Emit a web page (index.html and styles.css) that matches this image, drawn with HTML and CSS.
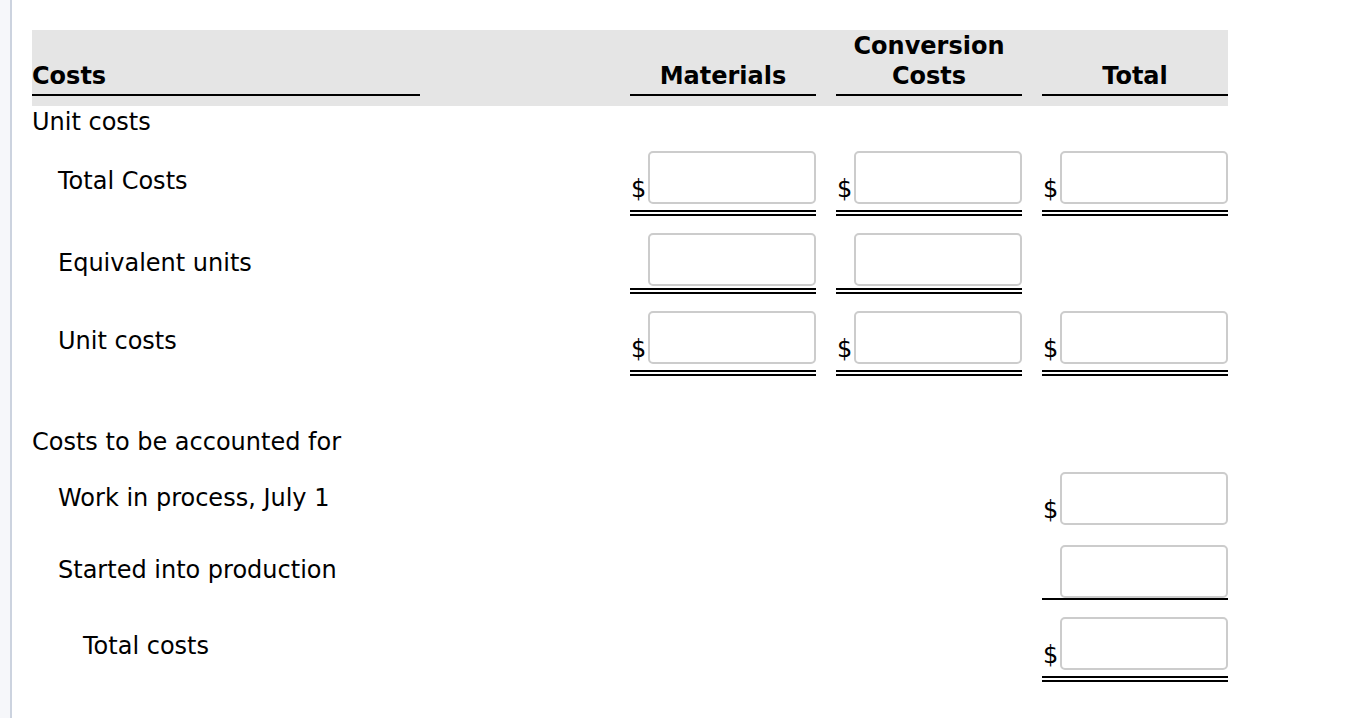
FILE: index.html
```html
<!DOCTYPE html>
<html lang="en">
<head>
<meta charset="utf-8">
<title>Costs</title>
<link rel="stylesheet" href="styles.css">
</head>
<body>
<div class="page">
  <aside class="rail"></aside>
  <main class="sheet">
    <div class="row thead">
      <div class="th th-label">Costs</div>
      <div class="th-gap"></div>
      <div class="th">Materials</div>
      <div class="th">Conversion<br>Costs</div>
      <div class="th">Total</div>
    </div>

    <div class="section s-first">Unit costs</div>

    <div class="row">
      <div class="label ind1 lp31">Total Costs</div>
      <div class="cell c-mat pt15 pb6 dbl"><span class="cur">$</span><input class="amt" type="text"></div>
      <div class="cell c-conv pt15 pb6 dbl"><span class="cur">$</span><input class="amt" type="text"></div>
      <div class="cell c-tot pt15 pb6 dbl"><span class="cur">$</span><input class="amt" type="text"></div>
    </div>

    <div class="row">
      <div class="label ind1 lp33">Equivalent units</div>
      <div class="cell c-mat pt17 pb2 dbl"><input class="amt" type="text"></div>
      <div class="cell c-conv pt17 pb2 dbl"><input class="amt" type="text"></div>
    </div>

    <div class="row">
      <div class="label ind1 lp33">Unit costs</div>
      <div class="cell c-mat pt17 pb6 dbl"><span class="cur">$</span><input class="amt" type="text"></div>
      <div class="cell c-conv pt17 pb6 dbl"><span class="cur">$</span><input class="amt" type="text"></div>
      <div class="cell c-tot pt17 pb6 dbl"><span class="cur">$</span><input class="amt" type="text"></div>
    </div>

    <div class="section s-second">Costs to be accounted for</div>

    <div class="row">
      <div class="label ind1 lp28">Work in process, July 1</div>
      <div class="cell c-tot pt16 pb6"><span class="cur">$</span><input class="amt" type="text"></div>
    </div>

    <div class="row">
      <div class="label ind1 lp25">Started into production</div>
      <div class="cell c-tot pt14 pb0 sgl"><input class="amt" type="text"></div>
    </div>

    <div class="row">
      <div class="label ind2 lp32">Total costs</div>
      <div class="cell c-tot pt17 pb6 dbl"><span class="cur">$</span><input class="amt" type="text"></div>
    </div>
  </main>
</div>
</body>
</html>
```

FILE: styles.css
```css
html, body {
  margin: 0;
  padding: 0;
  background: #ffffff;
}

body {
  font-family: "DejaVu Sans", Verdana, sans-serif;
  font-size: 24px;
  color: #000000;
}

.page {
  display: flex;
  min-height: 100vh;
}

.rail {
  width: 10px;
  flex: 0 0 10px;
  background: #f6f7fa;
  border-right: 2px solid #ccd3df;
}

.sheet {
  padding: 30px 0 0 20px;
  width: 1196px;
}

.row {
  display: grid;
  grid-template-columns: 388px 170px 186px 186px 186px;
  column-gap: 20px;
  align-items: start;
}

/* header band */
.thead {
  background: #e5e5e5;
  padding: 1px 0 10px;
  align-items: end;
}

.th {
  font-weight: bold;
  line-height: 30px;
  text-align: center;
  padding-bottom: 3px;
  border-bottom: 2px solid #000000;
}

.th-label {
  text-align: left;
}

/* section titles */
.section {
  line-height: 28px;
}

.s-first {
  padding-top: 2px;
}

.s-second {
  padding-top: 52px;
}

/* row labels */
.label {
  grid-column: 1;
  line-height: 28px;
  white-space: nowrap;
}

.ind1 { padding-left: 26px; }
.ind2 { padding-left: 51px; }

.lp25 { padding-top: 25px; }
.lp28 { padding-top: 28px; }
.lp31 { padding-top: 31px; }
.lp32 { padding-top: 32px; }
.lp33 { padding-top: 33px; }

/* value cells */
.cell {
  display: flex;
  align-items: flex-end;
}

.c-mat { grid-column: 3; }
.c-conv { grid-column: 4; }
.c-tot { grid-column: 5; }

.pt14 { padding-top: 14px; }
.pt15 { padding-top: 15px; }
.pt16 { padding-top: 16px; }
.pt17 { padding-top: 17px; }

.pb0 { padding-bottom: 0; }
.pb2 { padding-bottom: 2px; }
.pb6 { padding-bottom: 6px; }

.dbl { border-bottom: 6px double #000000; }
.sgl { border-bottom: 2px solid #000000; }

.cur {
  line-height: 24px;
  font-size: 24px;
  margin: 0 0 3px 1px;
}

.amt {
  margin-left: auto;
  width: 168px;
  height: 53px;
  box-sizing: border-box;
  border: 2px solid #cccccc;
  border-radius: 5px;
  background: #ffffff;
  font-family: "DejaVu Sans", Verdana, sans-serif;
  font-size: 20px;
  padding: 0 6px;
  outline: none;
}
```
